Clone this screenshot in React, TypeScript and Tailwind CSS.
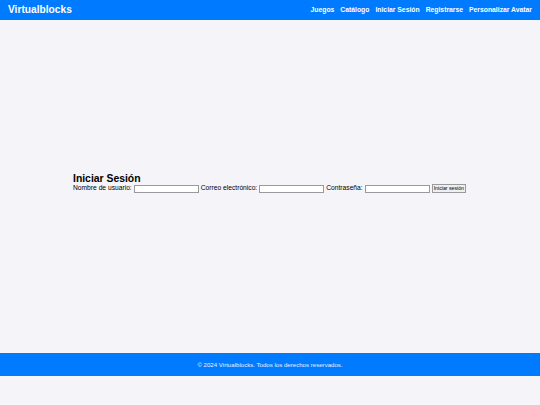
export default function App() {
  const links = ["Juegos", "Catálogo", "Iniciar Sesión", "Registrarse", "Personalizar Avatar"];
  return (
    <div className="min-h-[405px] bg-[#f4f4f9] font-['Liberation_Sans',Arial,sans-serif] text-black">
      <header className="flex h-[20px] items-center justify-between bg-[#007bff] pl-[8px] pr-[8px] text-white">
        <h1 className="text-[10.2px] font-bold leading-none">Virtualblocks</h1>
        <nav className="flex gap-[6px] text-[6.8px] font-bold leading-none">
          {links.map((l) => (
            <a key={l} href="#" className="text-white">
              {l}
            </a>
          ))}
        </nav>
      </header>
      <main className="flex h-[333px] flex-col pl-[73px] pt-[153px]">
        <h2 className="text-[10.4px] font-bold leading-[11px]">Iniciar Sesión</h2>
        <form className="flex h-[9px] items-center text-[6.7px] leading-none text-black">
          <label>Nombre de usuario:</label>
          <input type="text" className="ml-[2px] h-[8px] w-[65px] border border-[#9a9a9a] bg-white" />
          <label className="ml-[2px]">Correo electrónico:</label>
          <input type="email" className="ml-[2px] h-[8px] w-[65px] border border-[#9a9a9a] bg-white" />
          <label className="ml-[2px]">Contraseña:</label>
          <input type="password" className="ml-[2px] h-[8px] w-[65px] border border-[#9a9a9a] bg-white" />
          <button type="button" className="ml-[2px] h-[9px] border border-[#9a9a9a] bg-[#efefef] px-[1px] text-[5.2px] leading-none">
            Iniciar sesión
          </button>
        </form>
      </main>
      <footer className="flex h-[23px] items-center justify-center bg-[#007bff] text-[6.1px] text-[#e6f0ff]">
        © 2024 Virtualblocks. Todos los derechos reservados.
      </footer>
    </div>
  );
}
